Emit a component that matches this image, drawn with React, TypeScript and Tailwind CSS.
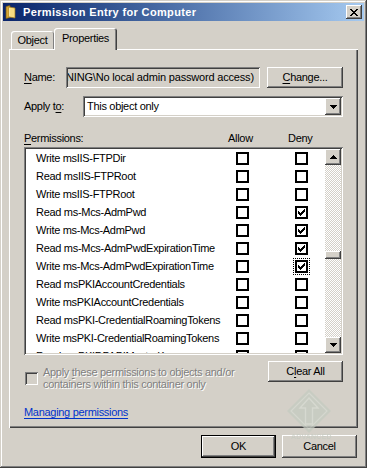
import React from "react";

const raised =
  "shadow-[inset_-1px_-1px_#404040,inset_1px_1px_#ffffff,inset_-2px_-2px_#808080,inset_2px_2px_#d4d0c8]";
const sunken =
  "shadow-[inset_1px_1px_#808080,inset_-1px_-1px_#ffffff,inset_2px_2px_#404040,inset_-2px_-2px_#d4d0c8]";

function TriDown() {
  return (
    <svg width="7" height="4" viewBox="0 0 7 4" shapeRendering="crispEdges">
      <rect x="0" y="0" width="7" height="1" fill="#000" />
      <rect x="1" y="1" width="5" height="1" fill="#000" />
      <rect x="2" y="2" width="3" height="1" fill="#000" />
      <rect x="3" y="3" width="1" height="1" fill="#000" />
    </svg>
  );
}
function TriUp() {
  return (
    <svg width="7" height="4" viewBox="0 0 7 4" shapeRendering="crispEdges">
      <rect x="3" y="0" width="1" height="1" fill="#000" />
      <rect x="2" y="1" width="3" height="1" fill="#000" />
      <rect x="1" y="2" width="5" height="1" fill="#000" />
      <rect x="0" y="3" width="7" height="1" fill="#000" />
    </svg>
  );
}

function Check() {
  const px: [number, number][] = [
    [6, 0],
    [5, 1], [6, 1],
    [0, 2], [4, 2], [5, 2], [6, 2],
    [0, 3], [1, 3], [3, 3], [4, 3], [5, 3],
    [0, 4], [1, 4], [2, 4], [3, 4], [4, 4],
    [1, 5], [2, 5], [3, 5],
    [2, 6],
  ];
  return (
    <svg width="7" height="7" viewBox="0 0 7 7" shapeRendering="crispEdges">
      {px.map(([x, y], i) => (
        <rect key={i} x={x} y={y} width="1" height="1" fill="#000" />
      ))}
    </svg>
  );
}

function Box({ checked }: { checked: boolean }) {
  return (
    <div className="w-[13px] h-[13px] border-2 border-black bg-white flex items-center justify-center shrink-0">
      {checked && <Check />}
    </div>
  );
}

const rows: { name: string; allow: boolean; deny: boolean; focus?: boolean }[] = [
  { name: "Write msIIS-FTPDir", allow: false, deny: false },
  { name: "Read msIIS-FTPRoot", allow: false, deny: false },
  { name: "Write msIIS-FTPRoot", allow: false, deny: false },
  { name: "Read ms-Mcs-AdmPwd", allow: false, deny: true },
  { name: "Write ms-Mcs-AdmPwd", allow: false, deny: true },
  { name: "Read ms-Mcs-AdmPwdExpirationTime", allow: false, deny: true },
  { name: "Write ms-Mcs-AdmPwdExpirationTime", allow: false, deny: true, focus: true },
  { name: "Read msPKIAccountCredentials", allow: false, deny: false },
  { name: "Write msPKIAccountCredentials", allow: false, deny: false },
  { name: "Read msPKI-CredentialRoamingTokens", allow: false, deny: false },
  { name: "Write msPKI-CredentialRoamingTokens", allow: false, deny: false },
  { name: "Read msPKIDPAPIMasterKeys", allow: false, deny: false },
];

export default function App() {
  return (
    <div className="relative w-[367px] h-[468px] bg-[#d4d0c8] p-[3px] flex flex-col overflow-hidden font-['Liberation_Sans',Arial,sans-serif] text-[11px] tracking-[-0.3px] text-black leading-none shadow-[inset_-1px_-1px_#404040,inset_1px_1px_#d4d0c8,inset_-2px_-2px_#808080,inset_2px_2px_#ffffff]">
      {/* Title bar */}
      <div className="h-[18px] flex items-center bg-linear-to-r from-[#0a246a] to-[#a6caf0] pl-[2px] pr-[2px] shrink-0">
        <svg width="11" height="14" viewBox="0 0 11 14">
          <path d="M1 1.5 L5 0.5 L5 12.5 L1 13.5 Z" fill="#d8a838" stroke="#7a5a10" strokeWidth="0.7" />
          <path d="M4 2 L10 3 L10 13 L4 12 Z" fill="#f8dc80" stroke="#a07818" strokeWidth="0.7" />
          <path d="M4.6 2.8 L4.6 11.4" stroke="#fff6c8" strokeWidth="0.8" />
        </svg>
        <span className="ml-[7px] text-white font-bold text-[11px] tracking-[0.35px]">
          Permission Entry for Computer
        </span>
        <div className={`ml-auto w-[16px] h-[14px] bg-[#d4d0c8] flex items-center justify-center ${raised}`}>
          <svg width="8" height="7" viewBox="0 0 8 7" shapeRendering="crispEdges">
            {[0, 1, 2, 3, 4, 5, 6].map((i) => (
              <React.Fragment key={i}>
                <rect x={i} y={i} width="2" height="1" fill="#000" />
                <rect x={6 - i} y={i} width="2" height="1" fill="#000" />
              </React.Fragment>
            ))}
          </svg>
        </div>
      </div>

      {/* Tabs */}
      <div className="mt-[7px] h-[21px] flex items-end pl-[8px] shrink-0">
        <div className="w-[43px] h-[18px] flex items-center justify-center rounded-t-[3px] shadow-[inset_1px_1px_#ffffff,inset_-1px_0_#808080]">
          Object
        </div>
        <div className="relative z-10 w-[63px] h-[22px] -mb-[1px] bg-[#d4d0c8] flex items-start pt-[5px] justify-center rounded-t-[3px] shadow-[inset_1px_1px_#ffffff,inset_-1px_0_#404040,inset_-2px_0_#808080]">
          Properties
        </div>
      </div>

      {/* Panel */}
      <div className="mx-[6px] h-[379px] flex flex-col px-[15px] shrink-0 shadow-[inset_1px_1px_#ffffff,inset_-1px_-1px_#404040,inset_-2px_-2px_#808080]">
        {/* Name row */}
        <div className="mt-[18px] h-[21px] flex items-center">
          <div className="w-[42px]">
            <span className="underline underline-offset-[2px]">N</span>ame:
          </div>
          <div className={`w-[194px] h-[21px] p-[2px] bg-[#d4d0c8] ${sunken}`}>
            <div className="w-full h-full overflow-hidden flex items-center pl-[1px] whitespace-nowrap">
              <span className="-ml-[3px] tracking-[-0.18px]">NING\No local admin password access)</span>
            </div>
          </div>
          <div className={`ml-[7px] w-[76px] h-[21px] flex items-center justify-center ${raised}`}>
            <span>
              <span className="underline underline-offset-[2px]">C</span>hange...
            </span>
          </div>
        </div>

        {/* Apply to row */}
        <div className="mt-[8px] h-[21px] flex items-center">
          <div className="w-[59px]">
            Apply t<span className="underline underline-offset-[2px]">o</span>:
          </div>
          <div className={`w-[260px] h-[21px] p-[2px] bg-white flex ${sunken}`}>
            <div className="flex-1 flex items-center pl-[2px]">This object only</div>
            <div className={`w-[16px] h-full bg-[#d4d0c8] flex items-center justify-center ${raised}`}>
              <TriDown />
            </div>
          </div>
        </div>

        {/* Permissions header */}
        <div className="mt-[13px] h-[16px] flex items-center">
          <div className="w-[204px]">
            <span className="underline underline-offset-[2px]">P</span>ermissions:
          </div>
          <div className="w-[60px]">Allow</div>
          <div>Deny</div>
        </div>

        {/* List */}
        <div className={`mt-[1px] h-[208px] p-[2px] bg-white flex ${sunken}`}>
          <div className="flex-1 overflow-hidden">
            {rows.map((r, i) => (
              <div key={i} className="h-[18px] flex items-center">
                <div className="w-[210px] pl-[10px] whitespace-nowrap overflow-hidden">{r.name}</div>
                <Box checked={r.allow} />
                <div className="w-[46px] shrink-0" />
                <div className={r.focus ? "outline-1 outline-dotted outline-black outline-offset-[1px]" : ""}>
                  <Box checked={r.deny} />
                </div>
              </div>
            ))}
          </div>
          <div className="w-[16px] flex flex-col">
            <div className={`h-[16px] bg-[#d4d0c8] flex items-center justify-center ${raised}`}>
              <TriUp />
            </div>
            <div className="flex-1 bg-[image:repeating-conic-gradient(#d4d0c8_0%_25%,#ffffff_0%_50%)] bg-[length:2px_2px]">
              <div className={`mt-[86px] h-[8px] bg-[#d4d0c8] ${raised}`} />
            </div>
            <div className={`h-[16px] bg-[#d4d0c8] flex items-center justify-center ${raised}`}>
              <TriDown />
            </div>
          </div>
        </div>

        {/* Bottom row */}
        <div className="mt-[6px] flex items-start">
          <div className="flex-1 flex items-center mt-[5px] pl-[1px]">
            <div className={`w-[13px] h-[13px] bg-[#d4d0c8] shrink-0 ${sunken}`} />
            <div className="ml-[5px] leading-[12px] text-[#808080] [text-shadow:1px_1px_0_#ffffff]">
              <div>
                Apply <span className="underline underline-offset-[2px]">t</span>hese permissions to objects and/or
              </div>
              <div>containers within this container only</div>
            </div>
          </div>
          <div className={`w-[75px] h-[21px] flex items-center justify-center shrink-0 ${raised}`}>
            <span>
              C<span className="underline underline-offset-[2px]">l</span>ear All
            </span>
          </div>
        </div>

        <div className="mt-auto mb-[9px] leading-[13px] text-[#0033cc] underline underline-offset-[2px]">
          Managing permissions
        </div>
      </div>

      {/* Buttons */}
      <div className="mt-[7px] flex justify-end gap-[6px] pr-[7px] shrink-0">
        <div className="w-[75px] h-[23px] flex items-center justify-center shadow-[inset_0_0_0_1px_#000000,inset_-2px_-2px_#404040,inset_2px_2px_#ffffff,inset_-3px_-3px_#808080]">
          OK
        </div>
        <div className={`w-[75px] h-[23px] flex items-center justify-center ${raised}`}>Cancel</div>
      </div>

      {/* Watermark */}
      <div className="absolute left-[287px] top-[389px] pointer-events-none opacity-70">
        <svg width="44" height="44" viewBox="0 0 44 44">
          <polygon points="22,0 44,22 22,44 0,22" fill="#c3cbc0" />
          <polygon points="22,4 40,22 22,40 4,22" fill="none" stroke="#d6dbd2" strokeWidth="1.2" />
          <path d="M22 9 L31 19 L25.5 19 L25.5 35 L18.5 35 L18.5 19 L13 19 Z" fill="none" stroke="#d8ddd4" strokeWidth="1.4" />
        </svg>
      </div>
      <div className="absolute left-[291px] top-[433px] text-[7px] font-bold tracking-[0.2px] text-[#c6cbc2] opacity-70 pointer-events-none">
        ADVANCED
      </div>
    </div>
  );
}
